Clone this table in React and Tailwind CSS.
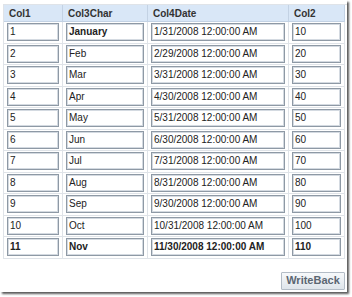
import React from "react";

const months = ["January","Feb","Mar","Apr","May","Jun","Jul","Aug","Sep","Oct","Nov"];
const dates = ["1/31/2008","2/29/2008","3/31/2008","4/30/2008","5/31/2008","6/30/2008","7/31/2008","8/31/2008","9/30/2008","10/31/2008","11/30/2008"];

function Box({ children, bold }) {
  return (
    <div className="h-full flex items-center">
      <div
        className={
          "w-full h-[18px] flex items-center pl-[2px] border border-[#8e99a5] bg-white shadow-[inset_0_0_0_1px_#d4dae1] leading-none " +
          (bold ? "font-bold" : "")
        }
      >
        {children}
      </div>
    </div>
  );
}

export default function App() {
  const rows = months.map((m, i) => ({
    c1: String(i + 1),
    c3: m,
    c4: dates[i] + " 12:00:00 AM",
    c2: String((i + 1) * 10),
    bold: i === 0 ? "month" : i === 10 ? "all" : "",
  }));
  const cell = "h-[21.5px] px-[3px] border-r border-b border-[#dfe3e8]";
  return (
    <div className="w-[352px] h-[297px] bg-white overflow-hidden">
      <div
        className="w-[347px] h-[292px] bg-white pt-[4px] pl-[3px] shadow-[2px_2px_2px_rgba(0,0,0,0.65)] text-[10px] text-[#222]"
        style={{ fontFamily: '"Liberation Sans", Arial, sans-serif' }}
      >
        <div className="grid grid-cols-[59px_85px_141px_56px] border-l border-t border-[#dfe3e8]">
          {["Col1", "Col3Char", "Col4Date", "Col2"].map((h) => (
            <div
              key={h}
              className="h-[17px] flex items-center px-[5px] bg-[#d9e7f7] border-r border-b border-[#c3d2e4] font-bold text-[#333]"
            >
              {h}
            </div>
          ))}
          {rows.map((r) => (
            <React.Fragment key={r.c1}>
              <div className={cell}>
                <Box bold={r.bold === "all"}>{r.c1}</Box>
              </div>
              <div className={cell}>
                <Box bold={r.bold !== ""}>{r.c3}</Box>
              </div>
              <div className={cell}>
                <Box bold={r.bold === "all"}>{r.c4}</Box>
              </div>
              <div className={cell}>
                <Box bold={r.bold === "all"}>{r.c2}</Box>
              </div>
            </React.Fragment>
          ))}
        </div>
        <div className="flex justify-end pr-[2px] mt-[13px]">
          <button className="h-[18px] w-[64px] flex items-center justify-center border border-[#b3bcc6] bg-gradient-to-b from-[#f7f9fb] to-[#dfe5eb] text-[11px] font-bold text-[#5b6672] rounded-[1px]">
            WriteBack
          </button>
        </div>
      </div>
    </div>
  );
}
